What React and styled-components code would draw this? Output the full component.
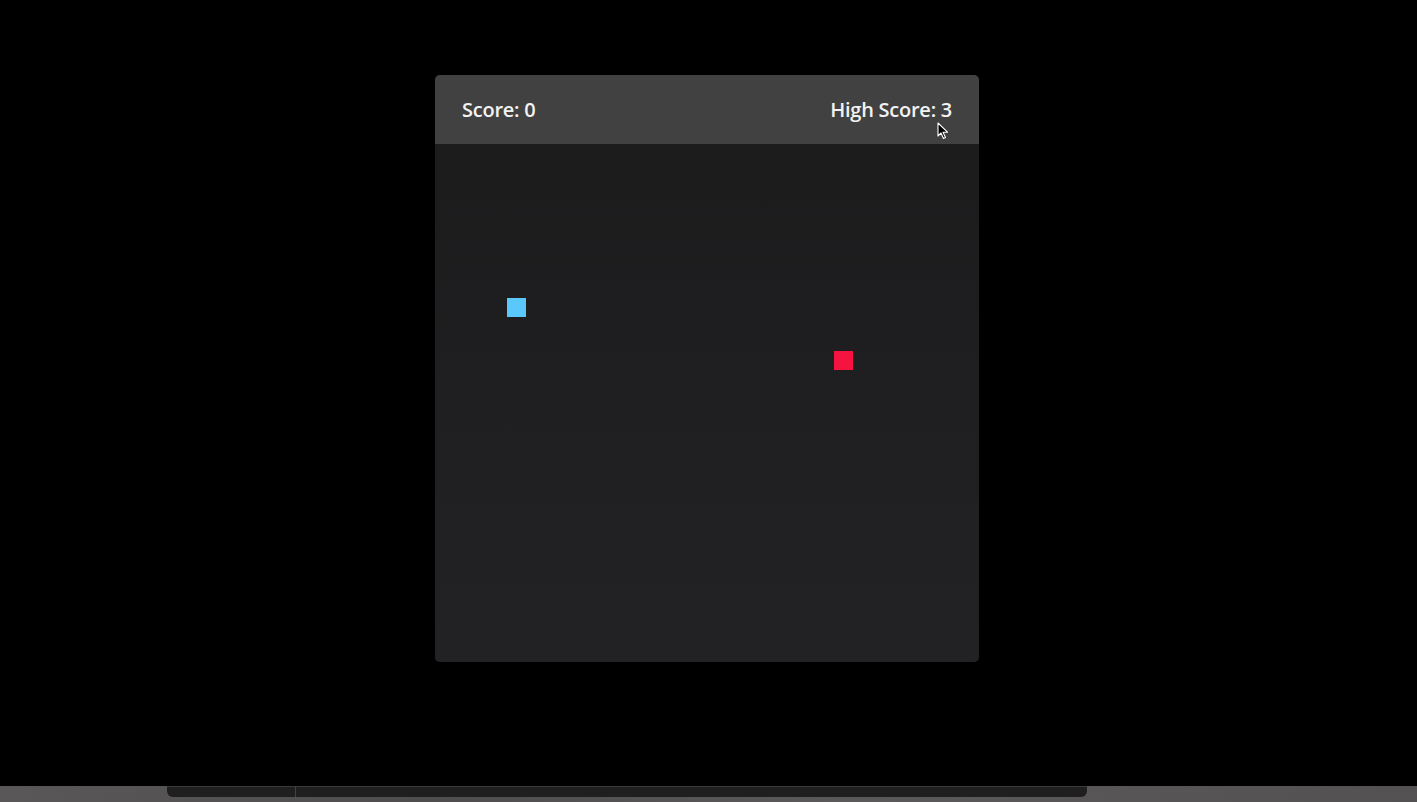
import React from 'react';
import styled, { createGlobalStyle } from 'styled-components';

const GlobalStyle = createGlobalStyle`
  html, body {
    margin: 0;
    padding: 0;
    background: #000;
    font-family: "Open Sans", "Noto Sans", sans-serif;
  }
`;

const snake = [{ x: 72, y: 154 }];
const food = { x: 399, y: 207 };

const App = () => {
  return (
    <Page>
      <GlobalStyle />
      <Stage>
        <Board>
          <ScoreBar>
            <ScoreText>Score: 0</ScoreText>
            <ScoreText>High Score: 3</ScoreText>
            <Cursor viewBox="0 0 12 18">
              <path d="M1 1 L1 14 L4 11 L6.5 16.5 L8.5 15.6 L6 10.2 L10.5 10.2 Z" fill="#000" stroke="#fff" strokeWidth="1.1" strokeLinejoin="round" />
            </Cursor>
          </ScoreBar>
          <Field>
            {snake.map((s, i) => (
              <Cell key={i} color="#5ac8fa" style={{ left: s.x, top: s.y }} />
            ))}
            <Cell color="#f5143f" style={{ left: food.x, top: food.y }} />
          </Field>
        </Board>
      </Stage>
      <DockStrip>
        <Dock>
          <DockSection $w="128px" />
          <DockSection $w="auto" $grow />
        </Dock>
      </DockStrip>
    </Page>
  );
};

const Page = styled.div`
  height: 100vh;
  display: flex;
  flex-direction: column;
`;

const Stage = styled.div`
  flex: 1;
  display: flex;
  justify-content: center;
  padding-top: 75px;
  padding-right: 3px;
`;

const Board = styled.div`
  width: 544px;
  height: 587px;
  border-radius: 5px;
  overflow: hidden;
  display: flex;
  flex-direction: column;
  background: #202022;
`;

const ScoreBar = styled.div`
  position: relative;
  height: 69px;
  flex-shrink: 0;
  background: #414141;
  display: flex;
  align-items: center;
  justify-content: space-between;
  padding: 0 27px 0 27px;
  box-sizing: border-box;
`;

const ScoreText = styled.span`
  color: #f2f2f2;
  font-size: 20px;
  font-weight: 600;
  letter-spacing: -0.25px;
`;

const Cursor = styled.svg`
  position: absolute;
  left: 502px;
  top: 47px;
  width: 12px;
  height: 18px;
`;

const Field = styled.div`
  position: relative;
  flex: 1;
  background: linear-gradient(#1c1c1d, #222225);
`;

const Cell = styled.div`
  position: absolute;
  width: 19px;
  height: 19px;
  background: ${p => p.color};
`;

const DockStrip = styled.div`
  height: 16px;
  background: linear-gradient(90deg, #5a5758, #4f4d4e 30%, #5c595a 60%, #535152);
  display: flex;
  align-items: flex-start;
  padding-left: 167px;
`;

const Dock = styled.div`
  width: 920px;
  height: 10px;
  display: flex;
  background: #1f1f20;
  border-top: 1px solid #3a3a3a;
  border-radius: 0 0 6px 6px;
`;

const DockSection = styled.div`
  width: ${p => p.$w};
  flex: ${p => (p.$grow ? 1 : 'none')};
  border-right: ${p => (p.$grow ? 'none' : '1px solid #444')};
`;

export default App;
